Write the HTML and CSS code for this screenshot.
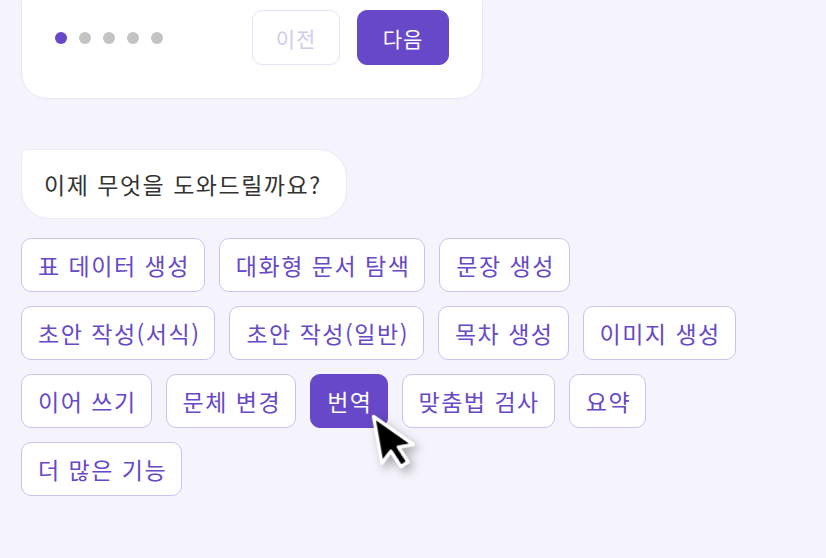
FILE: index.html
```html
<!DOCTYPE html>
<html lang="ko">
<head>
    <meta charset="UTF-8">
    <meta name="viewport" content="width=device-width, initial-scale=1.0">
    <title>Assistant</title>
    <link rel="stylesheet" href="styles.css">
</head>
<body>
    <div class="page">
        <section class="card">
            <div class="card-footer">
                <div class="dots">
                    <span class="dot active"></span>
                    <span class="dot"></span>
                    <span class="dot"></span>
                    <span class="dot"></span>
                    <span class="dot"></span>
                </div>
                <div class="nav">
                    <button class="btn btn-prev" disabled>이전</button>
                    <button class="btn btn-next">다음</button>
                </div>
            </div>
        </section>

        <div class="bubble">이제 무엇을 도와드릴까요?</div>

        <div class="chips">
            <button class="chip">표 데이터 생성</button>
            <button class="chip">대화형 문서 탐색</button>
            <button class="chip">문장 생성</button>
            <button class="chip">초안 작성(서식)</button>
            <button class="chip">초안 작성(일반)</button>
            <button class="chip">목차 생성</button>
            <button class="chip">이미지 생성</button>
            <button class="chip">이어 쓰기</button>
            <button class="chip">문체 변경</button>
            <button class="chip active">번역
                <svg class="cursor" width="48.4" height="68.2" viewBox="-3 -3 22 31">
                    <path d="M0 0 V21.5 L5 16.9 L8.3 24.6 L11.9 23 L8.7 15.6 H15.6 Z" fill="#000" stroke="#fff" stroke-width="1.6" stroke-linejoin="round"/>
                </svg>
            </button>
            <button class="chip">맞춤법 검사</button>
            <button class="chip">요약</button>
            <button class="chip">더 많은 기능</button>
        </div>
    </div>
</body>
</html>
```

FILE: styles.css
```css
body {
    margin: 0;
    padding: 0;
    background: #f5f3fb;
    font-family: "Noto Sans CJK KR", "Noto Sans", sans-serif;
    color: #333;
    overflow: hidden;
}
.page {
    display: flex;
    flex-direction: column;
    align-items: flex-start;
    padding: 0 21px;
}
.card {
    width: 462px;
    box-sizing: border-box;
    margin-top: -24px;
    padding: 33px 33px 33px 32px;
    background: #fff;
    border: 1px solid #e9e5f8;
    border-radius: 26px;
}
.card-footer {
    display: flex;
    justify-content: space-between;
    align-items: center;
}
.dots {
    display: flex;
    gap: 12px;
    padding-left: 1px;
}
.dot {
    width: 12px;
    height: 12px;
    border-radius: 50%;
    background: #c4c4c4;
}
.dot.active {
    background: #6648c8;
}
.nav {
    display: flex;
    gap: 17px;
}
.btn {
    height: 55px;
    padding: 0 20px;
    font-family: inherit;
    font-size: 21px;
    letter-spacing: 1px;
    border-radius: 10px;
    border: 1.5px solid #e6e1f6;
    background: #fff;
    cursor: pointer;
}
.btn-prev {
    color: #d2cbee;
    width: 88px;
}
.btn-next {
    color: #fff;
    background: #6648c8;
    border-color: #6648c8;
    width: 92px;
}
.bubble {
    margin-top: 50px;
    padding: 20px 24px 20px 22px;
    line-height: 28px;
    font-size: 23px;
    letter-spacing: 1.5px;
    background: #fff;
    border: 1px solid #ece8f8;
    border-radius: 6px 28px 28px 28px;
    color: #333;
}
.chips {
    display: flex;
    flex-wrap: wrap;
    gap: 14px;
    max-width: 730px;
    margin-top: 19px;
}
.chip {
    position: relative;
    height: 54px;
    padding: 0 14px 0 16px;
    font-family: inherit;
    font-size: 23px;
    letter-spacing: 1.5px;
    color: #6648c8;
    background: #fff;
    border: 1.5px solid #cdc2ef;
    border-radius: 10px;
    cursor: pointer;
}
.chip.active {
    color: #fff;
    background: #6648c8;
    border-color: #6648c8;
}
.cursor {
    position: absolute;
    z-index: 2;
    left: 56px;
    top: 35px;
    transform: rotate(-10deg);
    transform-origin: 6.6px 6.6px;
    filter: drop-shadow(3px 5px 5px rgba(0, 0, 0, 0.3));
}
```
